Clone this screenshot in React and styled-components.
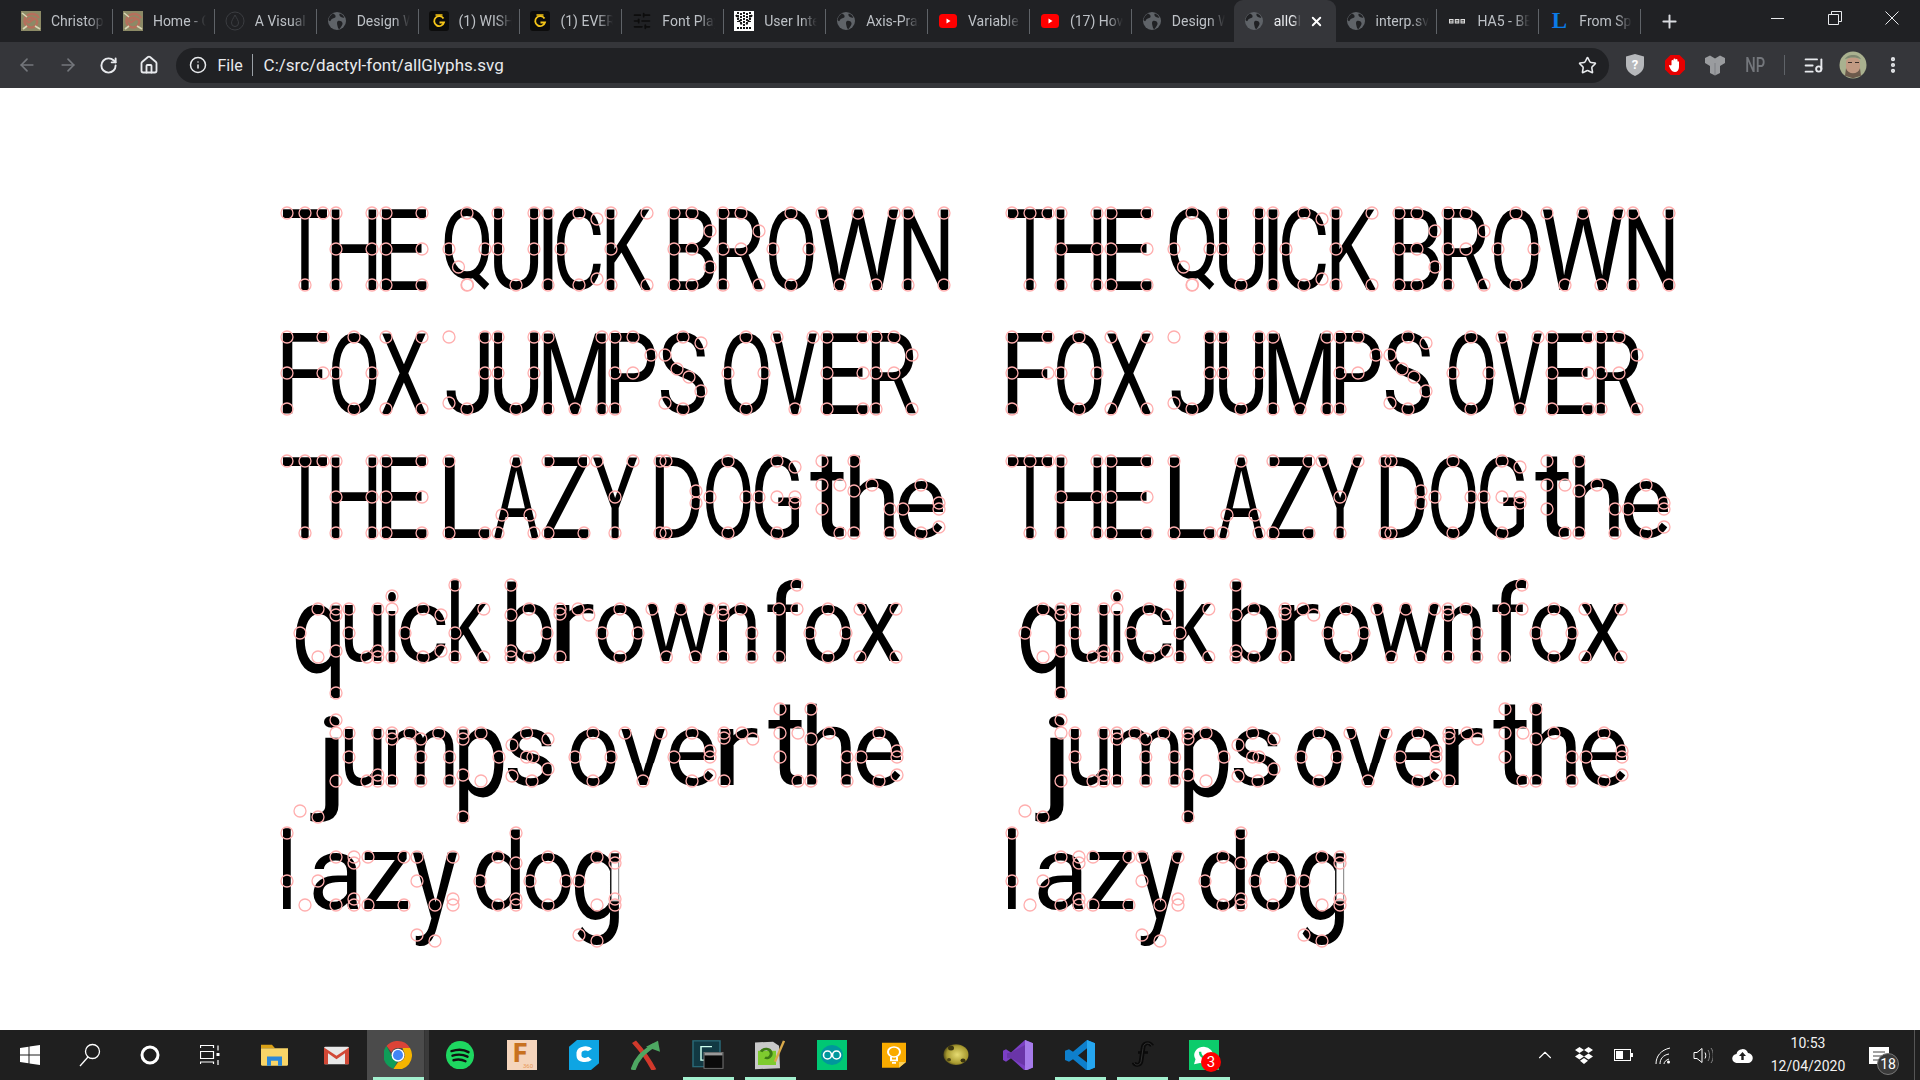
import React from "react";
import styled, { createGlobalStyle } from "styled-components";
import { ArrowLeft, ArrowRight, RotateCw, House, Star, X, Plus, Info, EllipsisVertical, ListMusic, ChevronUp, SlidersHorizontal } from "lucide-react";

const FONT_SIZE = 114;
const BASE = 100;
const WEIGHT = 400;

const Global = createGlobalStyle`
  html, body { margin: 0; padding: 0; background: #fff; }
  body { font-family: Roboto, "Liberation Sans", sans-serif; overflow: hidden; }
`;

const Page = styled.div`display:flex;flex-direction:column;width:1920px;height:1080px;overflow:hidden;`;

/* ---------- tab strip ---------- */
const TabStrip = styled.div`display:flex;align-items:stretch;height:42px;padding-left:11px;background:#202124;flex:none;`;
const Tab = styled.div`
  position:relative;display:flex;align-items:center;width:101.9px;flex:none;padding-left:10px;gap:10px;box-sizing:border-box;
  color:${p => (p.$active ? "#e8eaed" : "#bdc1c6")};
  background:${p => (p.$active ? "#35363a" : "transparent")};
  border-radius:${p => (p.$active ? "9px 9px 0 0" : "0")};
  &::after{content:"";display:${p => (p.$sep ? "block" : "none")};position:absolute;right:0;top:9px;height:25px;width:1px;background:#5f6368;}
`;
const TabIcon = styled.span`width:20px;height:20px;flex:none;display:flex;align-items:center;justify-content:center;`;
const TabLabel = styled.span`
  font-size:14px;white-space:nowrap;overflow:hidden;width:${p => (p.$active ? "27px" : "53px")};
  mask-image:linear-gradient(90deg,#000 70%,transparent 100%);
`;
const TabClose = styled.span`display:flex;margin-left:-2px;color:#fff;`;
const NewTab = styled.div`display:flex;align-items:center;justify-content:center;width:28px;margin-left:14px;color:#dadce0;`;
const WindowControls = styled.div`display:flex;margin-left:auto;height:36px;`;
const WindowButton = styled.div`width:57px;display:flex;align-items:center;justify-content:center;color:#e8eaed;`;

/* ---------- toolbar ---------- */
const Toolbar = styled.div`display:flex;align-items:center;height:46px;padding:0 7px;background:#35363a;flex:none;box-sizing:border-box;`;
const NavButton = styled.div`width:40.5px;height:35px;flex:none;display:flex;align-items:center;justify-content:center;color:${p => (p.$dim ? "#74777c" : "#e8eaed")};`;
const Omnibox = styled.div`display:flex;align-items:center;width:1433px;height:35px;flex:none;margin-left:6.5px;margin-right:6.5px;padding:0 12px 0 13px;box-sizing:border-box;border-radius:18px;background:#202124;color:#e8eaed;`;
const SchemeText = styled.span`font-size:16px;margin-left:11px;`;
const OmniDivider = styled.span`width:1px;height:22px;background:#9aa0a6;margin:0 11px 0 9px;`;
const UrlText = styled.span`font-size:17px;flex:1;white-space:nowrap;`;
const ExtButton = styled.div`width:40px;height:35px;flex:none;display:flex;align-items:center;justify-content:center;color:#e8eaed;`;
const ToolDivider = styled.span`width:1px;height:20px;background:#5f6368;margin:0 8.5px;flex:none;`;
const NpLabel = styled.span`font-size:21px;font-weight:500;color:#74777c;transform:scaleX(.7);`;

/* ---------- page with the specimen ---------- */
const Viewport = styled.div`flex:1;display:flex;padding-top:97px;padding-left:286.7px;background:#fff;min-height:0;`;
const Specimen = styled.div`width:725.3px;flex:none;display:flex;flex-direction:column;`;
const Line = styled.div`display:flex;height:124px;flex:none;padding-left:${p => p.$indent}px;`;
const Slot = styled.span`position:relative;display:block;height:124px;flex:none;width:${p => p.$w}px;`;
const Letter = styled.span`display:block;width:max-content;font:${WEIGHT} ${FONT_SIZE}px/124px Roboto, sans-serif;color:#000;white-space:pre;`;
const Nodes = styled.svg`position:absolute;left:0;top:${BASE}px;width:1px;height:1px;overflow:visible;`;

const T=-72,M=-36,X2=-48,H=-24;
const O4=[[18,T],[0,M],[36,M],[18,0]];
const G = {
  T:{w:36,d:[[0,T],[18,T],[36,T],[18,0]]},
  H:{w:36,d:[[0,T],[36,T],[0,M],[36,M],[0,0],[36,0]]},
  E:{w:36,d:[[0,T],[36,T],[0,M],[36,M],[0,0],[36,0]]},
  Q:{w:36,d:[...O4,[9.5,-18],[18.5,-.3]]},
  U:{w:36,d:[[0,T],[36,T],[0,M],[36,M],[18,0]]},
  I:{w:0,d:[[0,T],[0,0]]},
  C:{w:36,d:[[18,T],[36,-66],[0,M],[18,0],[36,-6]]},
  K:{w:36,d:[[0,T],[36,T],[0,M],[0,0],[36,0]]},
  B:{w:36,d:[[0,T],[18,T],[36,-54],[0,M],[18,M],[36,-18],[0,0],[18,0]]},
  R:{w:36,d:[[0,T],[18,T],[36,-54],[0,M],[18,M],[0,0],[36,0]]},
  O:{w:36,d:O4},
  W:{w:72,d:[[0,T],[18,0],[36,T],[54,0],[72,T]]},
  N:{w:36,d:[[0,T],[36,T],[0,0],[36,0]]},
  F:{w:36,d:[[0,T],[36,T],[0,M],[36,M],[0,0]]},
  X:{w:36,d:[[0,T],[36,T],[0,0],[36,0]]},
  J:{w:36,d:[[0,T],[36,T],[36,M],[0,-6],[18,0]],box:[-3,40.5]},
  M:{w:54,d:[[0,T],[54,T],[27,0],[0,0],[54,0]]},
  P:{w:36,d:[[0,T],[18,T],[36,-54],[0,M],[18,M],[0,0]]},
  S:{w:36,d:[[18,T],[36,-66],[0,-54],[12,-40],[24,-32],[36,-18],[0,-6],[18,0]]},
  V:{w:36,d:[[0,T],[36,T],[18,0]]},
  L:{w:36,d:[[0,T],[0,0],[36,0]]},
  A:{w:36,d:[[18,T],[4,-18],[32,-18],[0,0],[36,0]]},
  Z:{w:36,d:[[0,T],[36,T],[0,0],[36,0]]},
  Y:{w:36,d:[[0,T],[36,T],[18,M],[18,0]]},
  D:{w:36,d:[[0,T],[6,T],[36,-42],[36,-30],[0,0],[6,0]]},
  G:{w:36,d:[[18,T],[36,-66],[0,M],[18,M],[36,M],[36,-30],[18,0]]},
  q:{w:36,d:[[0,H],[18,X2],[18,0],[36,X2],[36,-42],[36,-6],[36,36]]},
  u:{w:28.8,d:[[0,X2],[28.8,X2],[0,H],[18,0],[28.8,-6],[28.8,0]]},
  i:{w:0,d:[[0,-61],[0,X2],[0,0]]},
  c:{w:36,d:[[18,X2],[36,-42],[0,H],[18,0],[36,-6]]},
  k:{w:28.8,d:[[0,T],[28.8,X2],[0,H],[0,0],[28.8,0]]},
  b:{w:36,d:[[0,T],[0,-42],[18,X2],[36,H],[0,-6],[0,0],[18,0]]},
  r:{w:28.8,d:[[0,X2],[0,-43],[18,X2],[28.8,-42],[0,0]]},
  o:{w:36,d:[[18,X2],[0,H],[36,H],[18,0]]},
  w:{w:57.6,d:[[0,X2],[14.4,0],[28.8,X2],[43.2,0],[57.6,X2]]},
  n:{w:28.8,d:[[0,X2],[0,-42],[18,X2],[28.8,H],[0,0],[28.8,0]]},
  f:{w:18,d:[[18,T],[0,X2],[18,X2],[0,0]],box:[-12,22.5]},
  x:{w:36,d:[[0,X2],[36,X2],[0,0],[36,0]]},
  j:{w:36,d:[[36,-61],[36,X2],[36,0],[0,30],[18,36]],box:[10,40.5]},
  m:{w:57.6,d:[[0,X2],[0,-42],[18,X2],[28.8,-42],[28.8,H],[28.8,0],[46.8,X2],[57.6,H],[57.6,0],[0,0]]},
  p:{w:36,d:[[0,X2],[0,-42],[18,X2],[36,H],[0,-6],[18,0],[0,36]]},
  s:{w:36,d:[[14.6,X2],[36,-42],[0,-36],[14.6,H],[21,H],[36,-12],[0,-5],[20,0]]},
  v:{w:36,d:[[0,X2],[36,X2],[18,0]]},
  e:{w:36,d:[[18,X2],[0,H],[36,-30],[36,H],[18,0],[36,-6]]},
  t:{w:18,d:[[0,T],[0,X2],[18,X2],[0,H],[18,0]],box:[-12,22.5]},
  h:{w:36,d:[[0,T],[0,-42],[18,X2],[36,H],[0,0],[36,0]]},
  l:{w:18,d:[[0,T],[0,H],[18,0]],box:[-4.5,4.5]},
  a:{w:36,d:[[0,H],[18,X2],[18,0],[36,X2],[36,-42],[36,-6],[36,0]]},
  z:{w:36,d:[[0,X2],[36,X2],[0,0],[36,0]]},
  y:{w:36,d:[[0,X2],[36,X2],[0,H],[18,0],[36,-6],[36,0],[0,30],[18,36]]},
  d:{w:36,d:[[0,H],[18,X2],[18,0],[36,T],[36,-42],[36,-6],[36,0]]},
  g:{w:36,d:[[0,H],[18,X2],[18,0],[36,X2],[36,-42],[36,-6],[36,0],[0,30],[18,36]],caret:true},
};

const GAP=13.5;
let ctx=null;
const metrics=new Map();
function measure(ch){
  if(metrics.has(ch))return metrics.get(ch);
  if(!ctx){ctx=document.createElement("canvas").getContext("2d");}
  ctx.font=`${WEIGHT} ${FONT_SIZE}px Roboto`;
  const m=ctx.measureText(ch);
  metrics.set(ch,m);
  return m;
}
function placement(ch,g){
  const m=measure(ch);
  const xs=g.d.map(p=>p[0]),ys=g.d.map(p=>p[1]);
  const x0=g.box?g.box[0]:Math.min(...xs)-4.5;
  const x1=g.box?g.box[1]:Math.max(...xs)+4.5;
  const y0=Math.min(...ys)-4.5,y1=Math.max(...ys)+4.5;
  const inkW=m.actualBoundingBoxRight+m.actualBoundingBoxLeft;
  const inkH=m.actualBoundingBoxAscent+m.actualBoundingBoxDescent;
  const sx=(x1-x0)/inkW,sy=(y1-y0)/inkH;
  const spanBase=(124+m.fontBoundingBoxAscent-m.fontBoundingBoxDescent)/2;
  const dx=x0+sx*m.actualBoundingBoxLeft;
  const dy=BASE+y0+sy*m.actualBoundingBoxAscent-spanBase;
  return {transform:`translate(${dx}px,${dy}px) scale(${sx},${sy})`,transformOrigin:`0 ${spanBase}px`};
}
function Glyph({ch}){
  if(ch===" ")return <Slot $w={GAP}> </Slot>;
  const g=G[ch];
  return (
    <Slot $w={g.w+GAP}>
      <Letter style={placement(ch,g)}>{ch}</Letter>
      <Nodes>
        {g.caret&&<rect x="32.3" y="-43" width="7.4" height="39" fill="#fff" stroke="#8a8a8a" strokeWidth="1"/>}
        {g.d.map(([x,y],i)=><circle key={i} cx={x} cy={y} r="6" fill="none" stroke="#ffaeae" strokeWidth="1.3"/>)}
      </Nodes>
    </Slot>
  );
}
const LINES=[["THE QUICK BROWN",0],["FOX JUMPS OVER",0],["THE LAZY DOG the",0],["quick brown fox",13.3],["jumps over the",13.3],["lazy dog",0]];
function Sheet(){
  return <Specimen>{LINES.map(([t,ind],i)=><Line key={i} $indent={ind}>{[...t].map((c,j)=><Glyph key={j} ch={c}/>)}</Line>)}</Specimen>;
}

/* ---------- favicons ---------- */
const Spiral=()=>(<svg width="20" height="20" viewBox="0 0 20 20"><rect width="20" height="20" fill="#8c8a66"/><path d="M10 10c3-4 7-2 6 2s-6 6-10 3S3 6 7 4s9-1 11 3M10 10c-3 3-5 0-3-2s6-2 7 1" fill="none" stroke="#b5705c" strokeWidth="2.4"/><path d="M1 2l5 4M19 18l-5-3M2 18l4-3" stroke="#d9d6b4" strokeWidth="1.6"/></svg>);
const Drop=()=>(<svg width="20" height="20" viewBox="0 0 20 20" fill="none" stroke="#3b3d41"><circle cx="10" cy="10" r="9"/><path d="M10 4c-2 4-3.5 5.5-3.5 8a3.5 3.5 0 007 0c0-2.5-1.500-4-3.500-8z"/></svg>);
const Globe=()=>(<svg width="20" height="20" viewBox="0 0 20 20"><circle cx="10" cy="10" r="9" fill="#5f6368"/><path d="M6 2.5c2 1 3 2 2.5 3.500S5 7 4 9 2.500 10 1.500 9C2 6 3.500 4 6 2.500zM11 10c2-.5 4 .5 4.500 2S14 16 12.500 18c-1 .3-1.500-1-2-3s-1-4.500.5-5zM13 2.500c2 .8 3.500 2.200 4.300 4-1.300.5-3 0-4-1S12 3 13 2.500z" fill="#202124"/></svg>);
const GoodG=()=>(<svg width="20" height="20" viewBox="0 0 20 20"><rect width="20" height="20" rx="3" fill="#0c0c0c"/><path d="M14.500 7.500A5 5 0 1015 11.500H10.500" fill="none" stroke="#f5c518" strokeWidth="1.800"/><path d="M6.500 4h7" stroke="#f5c518" strokeWidth="1.500"/></svg>);
const YouTube=()=>(<svg width="20" height="20" viewBox="0 0 20 20"><rect x="1" y="3" width="18" height="14" rx="3.500" fill="#f00"/><path d="M8.500 7.500l4 2.500-4 2.500z" fill="#fff"/></svg>);
const Pattern=()=>(<svg width="20" height="20" viewBox="0 0 20 20"><rect width="20" height="20" fill="#fff"/><path d="M4 1v10M7 2v12M10 1v17M13 2v12M16 1v10M2 4l6 10M18 4l-6 10M3 17h14" stroke="#111" strokeWidth="1.900" strokeDasharray="2 1"/></svg>);
const Bbc=()=>(<svg width="20" height="20" viewBox="0 0 20 20"><g fill="#ddd"><rect x="2" y="8" width="4.500" height="4.500"/><rect x="7.800" y="8" width="4.500" height="4.500"/><rect x="13.500" y="8" width="4.500" height="4.500"/></g><path d="M3 9.500h2.500M8.800 9.500h2.500M14.500 9.500h2.500M3 11h2.500M8.800 11h2.500M14.500 11h2.500" stroke="#333" strokeWidth=".8"/></svg>);
const LMark=styled.span`font:700 23px/20px "Liberation Serif",serif;color:#0a7be8;`;
const ICONS={spiral:<Spiral/>,drop:<Drop/>,globe:<Globe/>,g:<GoodG/>,yt:<YouTube/>,pattern:<Pattern/>,bbc:<Bbc/>,l:<LMark>L</LMark>,sliders:<SlidersHorizontal size={20} color="#0d0d0d" strokeWidth={2}/>};
const TABS=[["spiral","Christoph"],["spiral","Home - Christoph"],["drop","A Visual Guide"],["globe","Design With"],["g","(1) WISH"],["g","(1) EVERY"],["sliders","Font Play"],["pattern","User Inte"],["globe","Axis-Praxis"],["yt","Variable"],["yt","(17) How"],["globe","Design With"],["globe","allGlyphs.svg",true],["globe","interp.svg"],["bbc","HA5 - BBC"],["l","From Sp"]];

/* ---------- toolbar icons ---------- */
const Shield=()=>(<svg width="20" height="24" viewBox="0 0 20 24"><path d="M10 1l9 2.500V12c0 5-3.500 8.500-9 11C4.500 20.500 1 17 1 12V3.500z" fill="#b6b8bb"/><text x="10" y="16" textAnchor="middle" fontFamily="Roboto" fontWeight="700" fontSize="13" fill="#fff">?</text></svg>);
const StopHand=()=>(<svg width="22" height="22" viewBox="0 0 22 22"><path d="M6.500 1h9L21 6.500v9L15.500 21h-9L1 15.500v-9z" fill="#e60000"/><path d="M7.500 11V7a1 1 0 012 0V5.500a1 1 0 012 0V6a1 1 0 012 0v1.500a1 1 0 011.500.500V13c0 3-2 5-4 5s-3.500-1-4.500-3l-1.500-3c0-1 1-1.500 1.800-.5z" fill="#fff"/></svg>);
const Yshape=()=>(<svg width="22" height="22" viewBox="0 0 22 22"><path d="M1 4l5-2.500 5 3 5-3L21 4v5l-5 3v7l-5 2.500L6 19v-7L1 9z" fill="#9a9c9f"/><path d="M11 9v12" stroke="#7d7f83"/></svg>);
const Avatar=()=>(<svg width="28" height="28" viewBox="0 0 28 34" preserveAspectRatio="none"><ellipse cx="14" cy="17" rx="13.500" ry="16.500" fill="#a9b18f"/><path d="M7 13c0-7 14-7 14 0v6c0 6-4 10-7 10s-7-4-7-10z" fill="#c19a83"/><path d="M7 21c2 8 12 8 14 0l1 9-8 3-8-3z" fill="#6c5a4c"/><path d="M9 14h4M16 14h4" stroke="#3a302b" strokeWidth="1.300"/><path d="M6 10c2-7 14-7 16 0-5-3-11-3-16 0z" fill="#7e8770"/></svg>);

/* ---------- taskbar ---------- */
const Taskbar=styled.div`display:flex;align-items:stretch;height:50px;background:#1f1f1f;flex:none;color:#fff;`;
const SysButton=styled.div`width:60px;flex:none;display:flex;align-items:center;justify-content:center;`;
const AppGroup=styled.div`display:flex;margin-left:3px;`;
const AppSlot=styled.div`
  position:relative;width:62px;flex:none;display:flex;align-items:center;justify-content:center;
  background:${p=>p.$active?"#4b4b4b":"transparent"};
  &::after{content:"";display:${p=>p.$running?"block":"none"};position:absolute;bottom:0;left:5.5px;right:5.5px;height:3px;background:#a3f0cf;}
`;
const StackEdge=styled.span`position:absolute;right:0;top:0;bottom:0;width:4px;background:#3a3a3a;border-left:1px solid #333;`;
const AppBox=styled.span`position:relative;display:flex;`;
const Count=styled.span`position:absolute;right:-2px;bottom:-2px;width:20px;height:20px;border-radius:50%;background:#f00;color:#fff;font-size:15px;line-height:20px;text-align:center;`;
const Tray=styled.div`display:flex;align-items:center;margin-left:auto;`;
const TrayIcon=styled.span`width:39.5px;display:flex;justify-content:center;flex:none;`;
const Clock=styled.div`width:96px;margin-left:-2px;text-align:center;font-size:14px;line-height:23px;color:#f2f2f2;flex:none;`;
const NotifyBox=styled.span`position:relative;display:flex;margin-left:13px;margin-right:25px;`;
const NotifyCount=styled.span`position:absolute;right:-10px;bottom:-11px;width:22px;height:22px;border-radius:50%;background:#3a3a3a;border:1px solid #777;box-sizing:border-box;font-size:14px;line-height:20px;text-align:center;color:#fff;`;
const EdgeLine=styled.span`width:1px;background:#555;flex:none;margin-right:5px;`;

const I=({w=30,h=36,children,vb})=>(<svg width={w} height={h*30/36} viewBox={vb||`0 0 ${w} ${h}`} preserveAspectRatio="none">{children}</svg>);
const Apps=[
  {n:"files",el:<I w={29} h={27}><path d="M1 1h11l3 4H1z" fill="#d9a016"/><path d="M1 5h27v20a1 1 0 01-1 1H2a1 1 0 01-1-1z" fill="#f8d567"/><path d="M7 26V15h15v11h-4v-6h-7v6z" fill="#2b88d8"/></I>},
  {n:"mail",el:<I w={27} h={24}><rect x="1" y="2" width="25" height="21" rx="1.500" fill="#e8e8e8"/><path d="M1 23V3l12.500 10L26 3v20h-4V10l-8.500 7L5 10v13z" fill="#d14836"/></I>},
  {n:"chrome",active:true,run:true,stack:true,el:<I w={28} h={34} vb="0 0 28 28"><path d="M14 0a14 14 0 0112 7H14a7 7 0 00-6.500 4L2.500 5A14 14 0 0114 0z" fill="#db4437"/><path d="M2.500 5L8 15a7 7 0 006 4l-4.500 8.500A14 14 0 012.500 5z" fill="#0f9d58"/><path d="M26 7a14 14 0 01-16.500 20.500L14 21a7 7 0 005.500-11l-1-3z" fill="#f4b400"/><circle cx="14" cy="14" r="6.400" fill="#fff"/><circle cx="14" cy="14" r="5" fill="#4285f4"/></I>},
  {n:"spotify",el:<I w={28} h={34} vb="0 0 28 28"><circle cx="14" cy="14" r="14" fill="#1ed760"/><path d="M5.500 10c6-2 12-2 17 1M6.500 14.500c5-1.500 10-1.500 15 1M7.500 19c4-1 8-1 12 1" fill="none" stroke="#111" strokeWidth="2.400" strokeLinecap="round"/></I>},
  {n:"fusion",el:<I w={30} h={36} vb="0 0 30 30"><rect width="30" height="30" fill="#f5d5bc"/><text x="13" y="22" textAnchor="middle" fontFamily="Roboto" fontWeight="900" fontSize="25" fill="#c8711f">F</text><text x="21" y="28" textAnchor="middle" fontFamily="Roboto" fontSize="6" fill="#e8995a">360</text></I>},
  {n:"ccleaner",el:<I w={30} h={36}><path d="M8 0h22v28l-8 8H0V8z" fill="#0ea5e3"/><path d="M21 12c-2-3-10-3-11 3v4c0 6 8 6 11 3" fill="none" stroke="#fff" strokeWidth="5"/></I>},
  {n:"x",el:<I w={30} h={36}><path d="M3 2c6 8 14 20 20 34" fill="none" stroke="#d1392b" strokeWidth="5"/><path d="M2 36C6 20 14 14 23 6" fill="none" stroke="#4ea862" strokeWidth="5"/><path d="M15 8l12-7 2 13z" fill="#4ea862"/></I>},
  {n:"term",run:true,el:<I w={32} h={36}><rect x="1" y="1" width="27" height="31" fill="#123943" stroke="#2a6a78" strokeWidth="1.500"/><path d="M20 8H9v16h11" fill="none" stroke="#cfe" strokeWidth="1.500"/><rect x="12" y="15" width="19" height="19" fill="#0a0a0a" stroke="#777"/><rect x="12.500" y="15.500" width="18" height="3" fill="#999"/></I>},
  {n:"npp",run:true,el:<I w={30} h={36}><path d="M0 3l18-1 6 5 1 27-25 1z" fill="#c9c9c9"/><rect x="3" y="13" width="18" height="17" fill="#7ecb2e"/><path d="M6 14c3-5 9-4 10 1s-3 8-6 6" fill="none" stroke="#3d7a15" strokeWidth="3"/><path d="M20 26L29 1" stroke="#d8a94a" strokeWidth="2.400"/></I>},
  {n:"arduino",el:<I w={30} h={36}><rect width="30" height="36" fill="#00c774"/><ellipse cx="15" cy="18" rx="11" ry="12" fill="#00979c"/><ellipse cx="10.500" cy="18" rx="4" ry="4.800" fill="none" stroke="#fff" strokeWidth="1.600"/><ellipse cx="19.500" cy="18" rx="4" ry="4.800" fill="none" stroke="#fff" strokeWidth="1.600"/></I>},
  {n:"keep",el:<I w={24} h={32}><path d="M0 1h24v23l-7 7H0z" fill="#f9ab00"/><circle cx="12" cy="12" r="6" fill="none" stroke="#fff" strokeWidth="2"/><path d="M9 18v4h6v-4M10 25h4" fill="none" stroke="#fff" strokeWidth="2"/><path d="M17 31v-7h7z" fill="#fbd05a"/></I>},
  {n:"ball",el:<I w={26} h={28}><defs><radialGradient id="gold" cx=".55" cy=".5" r=".6"><stop offset="0" stopColor="#e6dc72"/><stop offset=".7" stopColor="#a89a30"/><stop offset="1" stopColor="#3a3410"/></radialGradient></defs><circle cx="13" cy="14" r="12.500" fill="url(#gold)"/><circle cx="8" cy="6" r="3" fill="#3a3410"/><circle cx="20" cy="21" r="2.500" fill="#3a3410"/><circle cx="6" cy="20" r="2" fill="#4d4515"/></I>},
  {n:"vs",el:<I w={30} h={37}><path d="M22 0l8 4v29l-8 4-14-15-5 4-3-2V13l3-2 5 4z" fill="#7b3fc4"/><path d="M22 0l8 4v29l-8 4z" fill="#a67bea"/><path d="M8 15l14-9v25L8 22l-4 0v-6z" fill="#5c2d91" opacity=".55"/></I>},
  {n:"code",run:true,el:<I w={30} h={37}><path d="M22 0l8 4v29l-8 4L8 23l-4 3-4-2V13l4-2 4 3z" fill="#0e7fcc"/><path d="M22 0l8 4v29l-8 4z" fill="#25a6f0"/><path d="M22 10l-9 8.500 9 8.500z" fill="#1f1f1f"/></I>},
  {n:"forge",run:true,el:<I w={24} h={36}><path d="M22 7c-3-6-9-3-9 3l-2 16c-1 5-6 5-7 1" fill="none" stroke="#0a0a0a" strokeWidth="4.500"/><path d="M8 15h10" stroke="#0a0a0a" strokeWidth="3"/><path d="M22 7c-3-6-9-3-9 3l-2 16c-1 5-6 5-7 1" fill="none" stroke="#333" strokeWidth="1"/></I>},
  {n:"wa",run:true,badge:"3",el:<I w={30} h={36}><rect width="30" height="36" fill="#0ccc6b"/><path d="M15 8a10 10 0 00-8.500 15L5 29l6-1.500A10 10 0 1015 8z" fill="#fff"/><path d="M11 14c0 5 4 8 8 9" fill="none" stroke="#0ccc6b" strokeWidth="2.400"/></I>},
];

export default function App(){
  return (
    <Page>
      <Global/>
      <TabStrip>
        {TABS.map(([ic,label,active],i)=>{
          const nextActive=TABS[i+1]&&TABS[i+1][2];
          return (
            <Tab key={i} $active={active} $sep={!active&&!nextActive}>
              <TabIcon>{ICONS[ic]}</TabIcon>
              <TabLabel $active={active}>{label}</TabLabel>
              {active&&<TabClose><X size={15} strokeWidth={3}/></TabClose>}
            </Tab>
          );
        })}
        <NewTab><Plus size={21} strokeWidth={2.2}/></NewTab>
        <WindowControls>
          <WindowButton><svg width="13" height="1"><rect width="13" height="1" fill="#e8eaed"/></svg></WindowButton>
          <WindowButton><svg width="14" height="14" fill="none" stroke="#e8eaed"><path d="M.5 3.500h10v10H.5zM3.500 3.500v-3h10v10h-3"/></svg></WindowButton>
          <WindowButton><svg width="14" height="14" stroke="#e8eaed"><path d="M.5.500l13 13M13.500.500l-13 13"/></svg></WindowButton>
        </WindowControls>
      </TabStrip>
      <Toolbar>
        <NavButton $dim><ArrowLeft size={20} strokeWidth={2}/></NavButton>
        <NavButton $dim><ArrowRight size={20} strokeWidth={2}/></NavButton>
        <NavButton><RotateCw size={19} strokeWidth={2.4}/></NavButton>
        <NavButton><House size={20} strokeWidth={2.2}/></NavButton>
        <Omnibox>
          <Info size={18} strokeWidth={2}/>
          <SchemeText>File</SchemeText>
          <OmniDivider/>
          <UrlText>C:/src/dactyl-font/allGlyphs.svg</UrlText>
          <Star size={19} strokeWidth={2}/>
        </Omnibox>
        <ExtButton><Shield/></ExtButton>
        <ExtButton><StopHand/></ExtButton>
        <ExtButton><Yshape/></ExtButton>
        <ExtButton><NpLabel>NP</NpLabel></ExtButton>
        <ToolDivider/>
        <ExtButton><ListMusic size={21} strokeWidth={2.2}/></ExtButton>
        <ExtButton><Avatar/></ExtButton>
        <ExtButton><EllipsisVertical size={20} strokeWidth={3}/></ExtButton>
      </Toolbar>
      <Viewport>
        <Sheet/>
        <Sheet/>
      </Viewport>
      <Taskbar>
        <SysButton><svg width="20" height="20" fill="#fff"><path d="M0 3l8.500-1.200V9.500H0zM9.500 1.600L20 0v9.500H9.500zM0 10.500h8.500v7.700L0 17zM9.500 10.500H20V20L9.500 18.400z"/></svg></SysButton>
        <SysButton><svg width="22" height="24" fill="none" stroke="#fff" strokeWidth="1.3"><circle cx="13.500" cy="8.500" r="7"/><path d="M9 14L1 23"/></svg></SysButton>
        <SysButton><svg width="20" height="20" fill="none" stroke="#fff" strokeWidth="3"><circle cx="10" cy="10" r="8"/></svg></SysButton>
        <SysButton><svg width="20" height="20" fill="none" stroke="#fff" strokeWidth="1.2"><path d="M.5 3V.5h13V3M.5 6.500h13v7H.5zM.5 19v-2h13v2M18 .5v5M18 15v5"/><rect x="16.500" y="8" width="3" height="3" fill="#fff" stroke="none"/></svg></SysButton>
        <AppGroup>
          {Apps.map(a=>(
            <AppSlot key={a.n} $active={a.active} $running={a.run}>
              <AppBox>{a.el}{a.badge&&<Count>{a.badge}</Count>}</AppBox>
              {a.stack&&<StackEdge/>}
            </AppSlot>
          ))}
        </AppGroup>
        <Tray>
          <TrayIcon><ChevronUp size={22} strokeWidth={1.2} color="#fff"/></TrayIcon>
          <TrayIcon><svg width="18" height="17" fill="#fff"><path d="M4.500 0L9 3 4.500 6 0 3zM13.500 0L18 3l-4.500 3L9 3zM4.500 6.500L9 9.500l-4.500 3-4.500-3zM13.500 6.500l4.500 3-4.500 3-4.500-3zM9 11l4 2.800L9 17l-4-3.200z"/></svg></TrayIcon>
          <TrayIcon><svg width="19" height="12" fill="none" stroke="#fff"><rect x=".5" y=".5" width="16" height="11"/><rect x="2" y="2" width="7" height="8" fill="#fff" stroke="none"/><rect x="17" y="4" width="2" height="4" fill="#fff" stroke="none"/></svg></TrayIcon>
          <TrayIcon><svg width="16" height="17" fill="none" stroke="#fff"><path d="M1 17C1 9 6 3 15 1M5 17c0-5 3-9 9-10M9 17c0-2 2-4 5-5" /><circle cx="13.500" cy="15" r="1.500" fill="#fff" stroke="none"/></svg></TrayIcon>
          <TrayIcon><svg width="20" height="17" fill="none" stroke="#fff"><path d="M1 5.500h3L9 1.500v14l-5-4H1z"/><path d="M12 5.500c1 2 1 4 0 6" /><path d="M15 3c2 3 2 8 0 11M18 1c3 4 3 11 0 15" stroke="#888"/></svg></TrayIcon>
          <TrayIcon><svg width="21" height="15"><path d="M5 15a4.500 4.500 0 01-.5-9 6 6 0 0111.500-1 5 5 0 01-.5 10z" fill="#fff"/><path d="M10.500 4l3.500 4h-2.300v4h-2.400V8H7z" fill="#1f1f1f"/></svg></TrayIcon>
          <Clock>10:53<br/>12/04/2020</Clock>
          <NotifyBox>
            <svg width="20" height="17"><rect width="20" height="17" fill="#fff"/><path d="M4 5h12M4 9h12M4 13h8" stroke="#444"/></svg>
            <NotifyCount>18</NotifyCount>
          </NotifyBox>
        </Tray>
        <EdgeLine/>
      </Taskbar>
    </Page>
  );
}
